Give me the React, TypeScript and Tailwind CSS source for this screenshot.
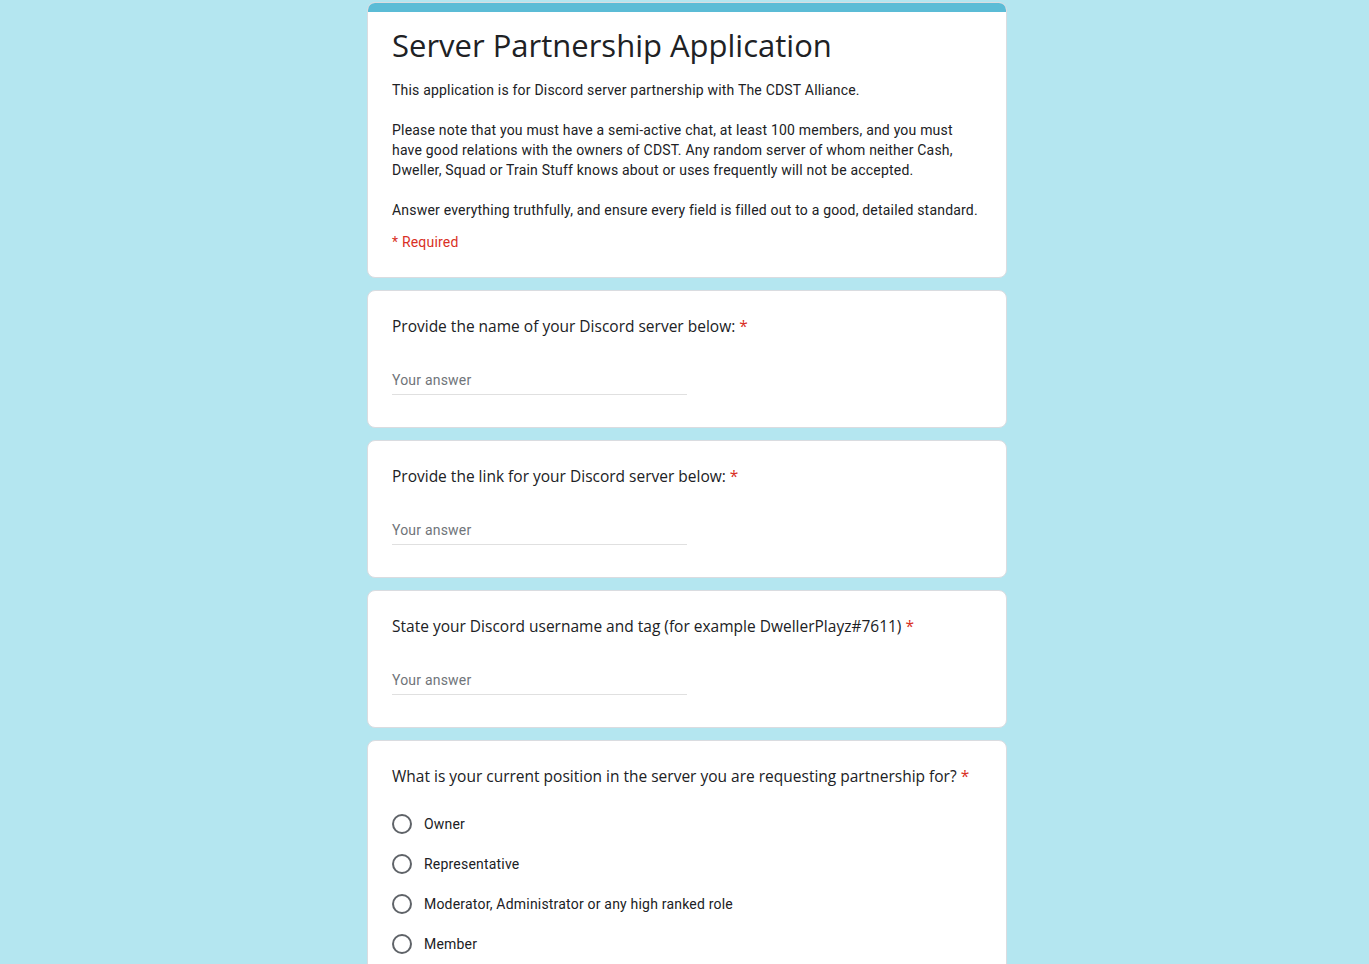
const questions = [
  "Provide the name of your Discord server below:",
  "Provide the link for your Discord server below:",
  "State your Discord username and tag (for example DwellerPlayz#7611)",
];

const options = [
  "Owner",
  "Representative",
  "Moderator, Administrator or any high ranked role",
  "Member",
];

const titleFont = { fontFamily: '"Open Sans", "Noto Sans", sans-serif' };

const QuestionTitle = ({ text }: { text: string }) => (
  <div className="text-[15.5px] leading-6 text-[#202124]" style={titleFont}>
    {text}
    <span className="text-[#d93025] ml-1">*</span>
  </div>
);

const TextQuestion = ({ text }: { text: string }) => (
  <div className="bg-white border border-[#dadce0] rounded-lg px-6 pt-[23px] pb-[32px]">
    <QuestionTitle text={text} />
    <div className="mt-[29px] w-[295px] h-[28px] border-b border-[#e0e0e0] flex items-center">
      <span className="text-[14px] text-[#70757a] tracking-[0.2px]">Your answer</span>
    </div>
  </div>
);

export default function App() {
  return (
    <div
      className="h-[964px] overflow-hidden bg-[#b4e6f0] pt-[2px] pl-[5px] flex justify-center"
      style={{ fontFamily: 'Roboto, "Liberation Sans", sans-serif' }}
    >
      <div className="w-[640px] flex flex-col gap-[12px]">
        {/* header card */}
        <div className="bg-white border border-[#dadce0] rounded-lg overflow-hidden shrink-0">
          <div className="h-[10px] bg-[#5bbcd6] -mx-px -mt-px" />
          <div className="px-6 pt-[13px] pb-[25px]">
            <h1 className="text-[31px] leading-10 text-[#202124]" style={titleFont}>
              Server Partnership Application
            </h1>
            <div className="mt-[15px] text-[14px] leading-5 text-[#202124] tracking-[0.2px]">
              <p>This application is for Discord server partnership with The CDST Alliance.</p>
              <p className="mt-5">
                Please note that you must have a semi-active chat, at least 100 members, and you must
                have good relations with the owners of CDST. Any random server of whom neither Cash,
                Dweller, Squad or Train Stuff knows about or uses frequently will not be accepted.
              </p>
              <p className="mt-5">
                Answer everything truthfully, and ensure every field is filled out to a good, detailed
                standard.
              </p>
            </div>
            <div className="mt-3 text-[14px] leading-5 text-[#d93025] tracking-[0.2px]">* Required</div>
          </div>
        </div>

        {questions.map((q) => (
          <TextQuestion key={q} text={q} />
        ))}

        <div className="bg-white border border-[#dadce0] rounded-lg px-6 pt-[23px] pb-6 shrink-0">
          <QuestionTitle text="What is your current position in the server you are requesting partnership for?" />
          <div className="mt-[16px] flex flex-col">
            {options.map((o) => (
              <label key={o} className="flex items-center h-10 gap-[12px] cursor-pointer">
                <span className="w-5 h-5 rounded-full border-2 border-[#5f6368] shrink-0" />
                <span className="text-[14px] text-[#202124] tracking-[0.2px]">{o}</span>
              </label>
            ))}
          </div>
        </div>
      </div>
    </div>
  );
}
